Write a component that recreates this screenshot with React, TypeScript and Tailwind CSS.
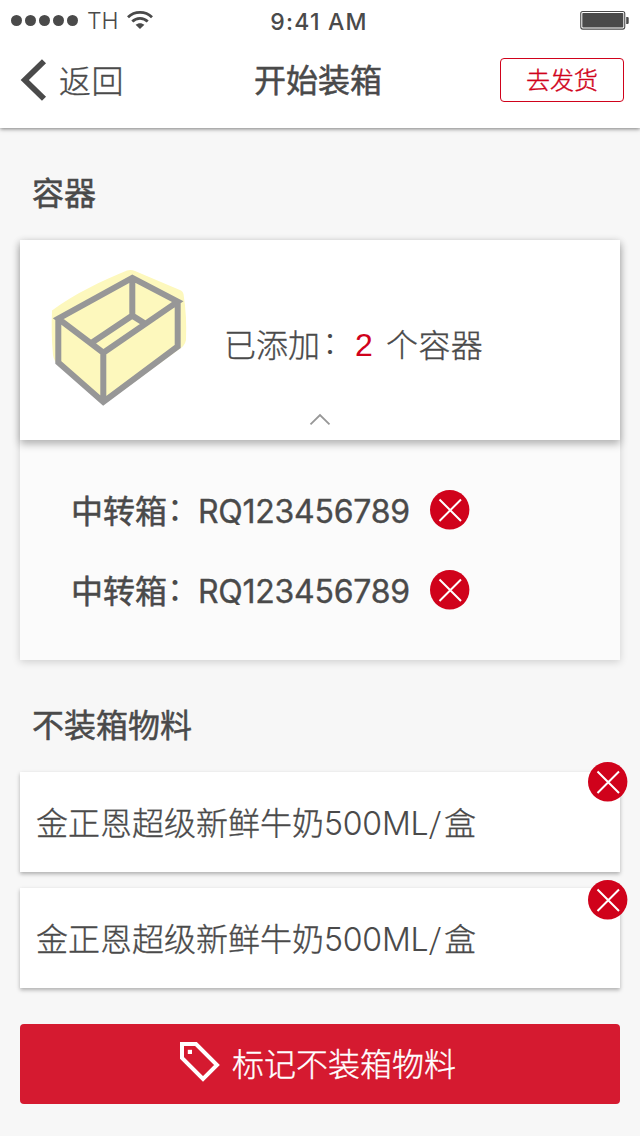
const CJK = "font-['Noto_Sans_CJK_SC',sans-serif]";
const LATIN = "font-['Inter','Noto_Sans_CJK_SC',sans-serif]";
const THIN = "font-light [-webkit-text-stroke:0.35px_currentColor]";
const STRONG = "font-normal [-webkit-text-stroke:0.5px_currentColor]";

function RemoveButton() {
  return (
    <button aria-label="删除" className="block h-10 w-10 shrink-0">
      <svg viewBox="0 0 40 40" className="h-10 w-10">
        <circle cx="19.7" cy="19.7" r="19.7" fill="#d0021b" />
        <path d="M9.5 9.5L31 31M31 9.5L9.5 31" stroke="#fff" strokeWidth="2" fill="none" />
      </svg>
    </button>
  );
}

function StatusBar() {
  return (
    <div className="flex h-10 items-center justify-between pr-[11px] pl-[11px]">
      <div className="flex w-[200px] items-center">
        <svg viewBox="0 0 68 12" className="h-3 w-[68px]" fill="#4a4a4a">
          <circle cx="5.5" cy="6.5" r="5.5" />
          <circle cx="19.5" cy="6.5" r="5.5" />
          <circle cx="33.5" cy="6.5" r="5.5" />
          <circle cx="47.5" cy="6.5" r="5.5" />
          <circle cx="61.5" cy="6.5" r="5.5" />
        </svg>
        <span className="mt-0.5 ml-2 w-[31px] text-[23px] leading-10 font-light whitespace-nowrap">TH</span>
        <svg viewBox="0 0 26 18" className="ml-[9px] h-[18px] w-[26px]" fill="none" stroke="#4a4a4a">
          <path d="M1 6.3C7.6-.2 18.4-.2 25 6.3" strokeWidth="2.8" />
          <path d="M5.3 10.6C9.6 6.4 16.4 6.4 20.7 10.6" strokeWidth="2.8" />
          <path d="M13 18L8.6 13.8C11.2 11.7 14.8 11.7 17.4 13.8Z" fill="#4a4a4a" stroke="none" />
        </svg>
      </div>
      <span className="mt-[3px] mr-[2px] text-[23px] leading-10 font-medium tracking-[1.2px] whitespace-nowrap">9:41 AM</span>
      <div className="flex w-[200px] justify-end">
        <svg viewBox="0 0 49 20" className="h-5 w-[49px]">
          <rect x=".75" y="1.5" width="44" height="17.6" rx="2" fill="none" stroke="#4a4a4a" strokeWidth="1.1" />
          <rect x="2.3" y="3" width="41" height="14.6" rx=".8" fill="#4a4a4a" />
          <path d="M46.2 7h1.3q1.2 0 1.2 1v5q0 1-1.2 1h-1.3z" fill="#4a4a4a" />
        </svg>
      </div>
    </div>
  );
}

function CrateIcon() {
  return (
    <svg viewBox="0 0 140 140" className="h-[140px] w-[140px] shrink-0">
      <path
        d="M2 42.5C24 26 52 13 77 2.6Q81 1.3 85 3L131 22.5Q133 23.5 133.5 26Q137 48 136 72Q135 78 128 82L53 137L9 97Q4 94 3 87Q1 66 2 42.5Z"
        fill="#fdf8bd"
      />
      <path
        d="M8.3 50.7L82.3 9.8L127.7 33.7L53.3 84.7ZM8.3 50.7V94.4L53.3 134L127.7 78.4V33.7M53.3 84.7V134M82.3 9.8V47.6L41.7 74.7M82.3 47.6L95 55.6"
        fill="none"
        stroke="#979797"
        strokeWidth="6"
      />
    </svg>
  );
}

function ContainerRow({ code }: { code: string }) {
  return (
    <div className="flex h-20 items-center pl-[51px]">
      <span className={`${CJK} ${STRONG} mb-[3px] w-[127px] text-[32px] leading-10 whitespace-nowrap`}>
        中转箱<span className="relative -top-[3px] [-webkit-text-stroke:0px]">：</span>
      </span>
      <span className="mt-[3px] w-[232px] text-[32px] leading-10 font-normal tracking-[-0.25px] whitespace-nowrap [-webkit-text-stroke:0.35px_currentColor]">
        {code}
      </span>
      <RemoveButton />
    </div>
  );
}

function ItemCard({ name, size, unit, className }: { name: string; size: string; unit: string; className: string }) {
  return (
    <div className="relative flex h-[100px] items-center bg-white pl-4 shadow-[0_2px_4px_rgba(0,0,0,0.3)]">
      <p className={`${CJK} ${THIN} mb-[3px] flex text-[32px] leading-10 whitespace-nowrap`}>
        <span>{name}</span>
        <span className={`${LATIN} relative top-[3px] flex w-[120px] tracking-[-0.2px] [-webkit-text-stroke:0.1px_currentColor]`}>
          {size}
          <span className="inline-block origin-left scale-x-[1.3] font-extralight [-webkit-text-stroke:0px]">/</span>
        </span>
        <span>{unit}</span>
      </p>
      <div className={`absolute left-[568px] ${className}`}>
        <RemoveButton />
      </div>
    </div>
  );
}

export default function App() {
  return (
    <div className={`${LATIN} flex h-[1136px] w-[640px] flex-col overflow-hidden bg-[#f7f7f7] text-[#4a4a4a]`}>
      <header className="h-32 shrink-0 bg-white shadow-[0_1px_4px_rgba(0,0,0,0.5)]">
        <StatusBar />
        <div className={`${CJK} flex h-20 items-center justify-between pr-4 pl-5`}>
          <button className="flex w-[116px] items-center">
            <svg viewBox="0 0 27 42" className="h-[42px] w-[27px]" fill="none" stroke="#4a4a4a" strokeWidth="5.8">
              <path d="M24 2.2L4.8 21L24 39.8" />
            </svg>
            <span className={`${THIN} mb-[3px] ml-3 text-[32px] leading-10 tracking-[0.4px] whitespace-nowrap`}>返回</span>
          </button>
          <h1 className={`${STRONG} mb-[5px] text-[32px] leading-10`}>开始装箱</h1>
          <button className="h-11 w-[124px] rounded border border-[#d0021b] pb-0.5 text-[24px] leading-[40px] font-light text-[#d0021b] [-webkit-text-stroke:0.4px_currentColor]">
            去发货
          </button>
        </div>
      </header>

      <main className="px-5">
        <h2 className={`${CJK} ${STRONG} mt-[43px] pl-3 text-[32px] leading-10`}>容器</h2>
        <section className="mt-[29px] h-[420px] bg-[#fbfbfb] shadow-[0_2px_8px_rgba(0,0,0,0.16)]">
          <div className="h-[200px] bg-white pt-7 pl-[30px] shadow-[0_4px_8px_rgba(0,0,0,0.3)]">
            <div className="flex h-[140px]">
              <CrateIcon />
              <p className={`${CJK} ${THIN} mt-[55px] ml-[34px] flex text-[32px] leading-10 whitespace-nowrap`}>
                <span className="w-[131px]">
                  已添加<span className="relative -top-[3px] left-[2px] [-webkit-text-stroke:0px]">：</span>
                </span>
                <span className="relative top-[2px] w-[31px] font-['Liberation_Sans',sans-serif] font-normal text-[#d0021b] [-webkit-text-stroke:0px]">
                  2
                </span>
                <span className="tracking-[0.4px]">个容器</span>
              </p>
            </div>
            <svg viewBox="0 0 22 14" className="mt-[4px] ml-[259px] h-3.5 w-[22px]" fill="none" stroke="#979797" strokeWidth="1.8">
              <path d="M1.5 12.3L11 3L20.5 12.3" />
            </svg>
          </div>
          <div className="pt-[30px]">
            <ContainerRow code="RQ123456789" />
            <ContainerRow code="RQ123456789" />
          </div>
        </section>

        <h2 className={`${CJK} ${STRONG} mt-[43px] pl-3 text-[32px] leading-10`}>不装箱物料</h2>
        <div className="mt-[29px] flex flex-col gap-4">
          <ItemCard className="-top-[10px]" name="金正恩超级新鲜牛奶" size="500ML" unit="盒" />
          <ItemCard className="-top-2" name="金正恩超级新鲜牛奶" size="500ML" unit="盒" />
        </div>

        <button className="mt-9 flex h-20 w-full items-center rounded bg-[#d51a30] pl-40 text-white">
          <svg viewBox="0 0 40 40" className="mb-1 h-10 w-10" fill="none" stroke="#fff" strokeWidth="4">
            <path d="M2 2H16L37 23L23 37L2 16Z" />
            <path d="M7.8 7.8H12V12H7.8Z" fill="#fff" stroke="none" />
          </svg>
          <span className={`${CJK} ${THIN} mb-[5px] ml-3 text-[32px] leading-10 whitespace-nowrap`}>标记不装箱物料</span>
        </button>
      </main>
    </div>
  );
}
